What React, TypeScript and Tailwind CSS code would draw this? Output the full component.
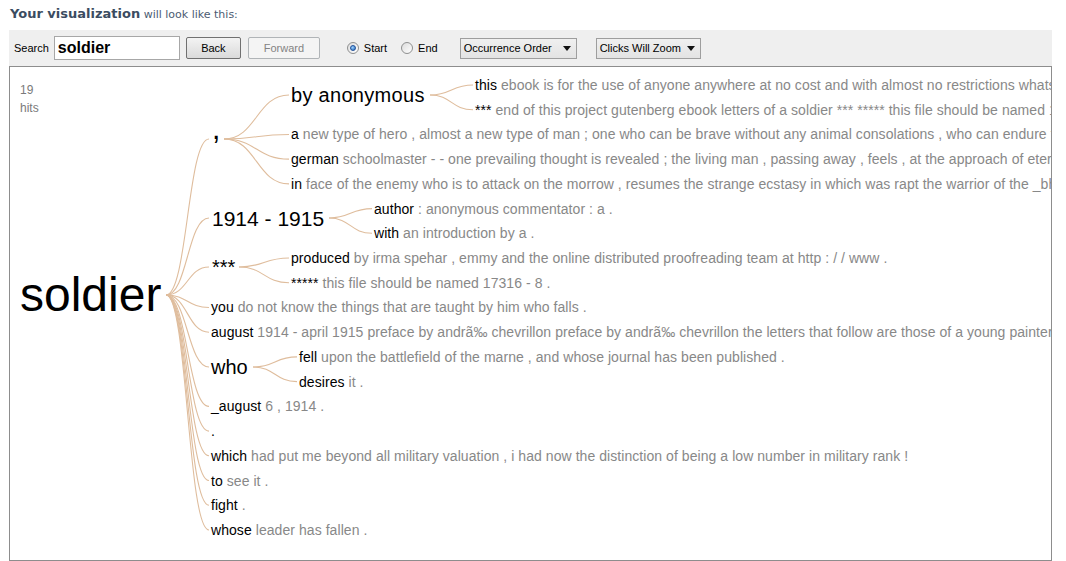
import React from "react";

// word tree canvas origin (inside the frame border), in page pixels
const OX = 10;
const OY = 67;
const row = (i: number) => 85 + i * 24.72;

type Leaf = { x: number; y: number; word: string; rest: string };
type Hub = { x: number; y: number; size: number; cls: string; word: string };

const hubs: Hub[] = [
  { x: 20, y: 295, size: 48, cls: "text-[48px]", word: "soldier" },
  { x: 212, y: 129, size: 30, cls: "text-[30px]", word: "," },
  { x: 291, y: 95, size: 20, cls: "text-[20px] tracking-[0.3px]", word: "by anonymous" },
  { x: 212, y: 218, size: 21, cls: "text-[21px]", word: "1914 - 1915" },
  { x: 212, y: 267, size: 20, cls: "text-[20px]", word: "***" },
  { x: 211, y: 367, size: 20, cls: "text-[20px]", word: "who" },
];

const leaves: Leaf[] = [
  { x: 475, y: row(0), word: "this", rest: " ebook is for the use of anyone anywhere at no cost and with almost no restrictions whatsoever ." },
  { x: 475, y: row(1), word: "***", rest: " end of this project gutenberg ebook letters of a soldier *** ***** this file should be named 17316 - 8 ." },
  { x: 291, y: row(2), word: "a", rest: " new type of hero , almost a new type of man ; one who can be brave without any animal consolations , who can endure the worst" },
  { x: 291, y: row(3), word: "german", rest: " schoolmaster - - one prevailing thought is revealed ; the living man , passing away , feels , at the approach of eternity" },
  { x: 291, y: row(4), word: "in", rest: " face of the enemy who is to attack on the morrow , resumes the strange ecstasy in which was rapt the warrior of the _bhagavad gita_" },
  { x: 374, y: row(5), word: "author", rest: " : anonymous commentator : a ." },
  { x: 374, y: row(6), word: "with", rest: " an introduction by a ." },
  { x: 291, y: row(7), word: "produced", rest: " by irma spehar , emmy and the online distributed proofreading team at http : / / www ." },
  { x: 291, y: row(8), word: "*****", rest: " this file should be named 17316 - 8 ." },
  { x: 211, y: row(9), word: "you", rest: " do not know the things that are taught by him who falls ." },
  { x: 211, y: row(10), word: "august", rest: " 1914 - april 1915 preface by andrã‰ chevrillon preface by andrã‰ chevrillon the letters that follow are those of a young painter" },
  { x: 299, y: row(11), word: "fell", rest: " upon the battlefield of the marne , and whose journal has been published ." },
  { x: 299, y: row(12), word: "desires", rest: " it ." },
  { x: 211, y: row(13), word: "_august", rest: " 6 , 1914 ." },
  { x: 211, y: row(14), word: ".", rest: "" },
  { x: 211, y: row(15), word: "which", rest: " had put me beyond all military valuation , i had now the distinction of being a low number in military rank !" },
  { x: 211, y: row(16), word: "to", rest: " see it ." },
  { x: 211, y: row(17), word: "fight", rest: " ." },
  { x: 211, y: row(18), word: "whose", rest: " leader has fallen ." },
];

// [fromX, fromY, toX, toY]
const edges: number[][] = [
  // soldier
  ...[139, 218, 267, row(9), row(10), 367, row(13), row(14), row(15), row(16), row(17), row(18)].map((y) => [166, 295, 209, y]),
  // ,
  [224, 139, 289, 95],
  ...[row(2), row(3), row(4)].map((y) => [224, 139, 289, y]),
  // by anonymous
  [430, 95, 473, row(0)],
  [430, 95, 473, row(1)],
  // 1914 - 1915
  [329, 218, 372, row(5)],
  [329, 218, 372, row(6)],
  // ***
  [239, 267, 289, row(7)],
  [239, 267, 289, row(8)],
  // who
  [253, 367, 297, row(11)],
  [253, 367, 297, row(12)],
];

function curve([x1, y1, x2, y2]: number[]) {
  const a = x1 - OX;
  const b = y1 - OY;
  const c = x2 - OX;
  const d = y2 - OY;
  const m = (a + c) / 2;
  return `M${a} ${b} C${m} ${b}, ${m} ${d}, ${c} ${d}`;
}

function Radio({ on, label }: { on: boolean; label: string }) {
  return (
    <label className="flex items-center gap-[5px] text-[11px] text-black">
      <span className="w-[12px] h-[12px] rounded-full border border-[#8e8f8f] bg-gradient-to-br from-[#dcdcdc] to-[#ffffff] flex items-center justify-center">
        {on && (
          <span className="w-[6px] h-[6px] rounded-full bg-[radial-gradient(circle_at_35%_35%,#9fd3ff,#1f67b8)] border border-[#20509a]" />
        )}
      </span>
      {label}
    </label>
  );
}

function Select({ label, w }: { label: string; w: string }) {
  return (
    <div className={`${w} h-[21px] border border-[#9e9e9e] bg-gradient-to-b from-[#f0f0f0] to-[#e3e3e3] flex items-center justify-between pl-[3px] pr-[5px] text-[11px] text-black whitespace-nowrap`}>
      <span>{label}</span>
      <svg width="8" height="5" viewBox="0 0 8 5">
        <path d="M0 0 H8 L4 5 Z" fill="#111" />
      </svg>
    </div>
  );
}

export default function App() {
  return (
    <div className="w-[1066px] h-[561px] overflow-hidden bg-white font-['Liberation_Sans',Arial,sans-serif]">
      <div className="h-[30px] pl-[10px] pt-[5px] font-['DejaVu_Sans',Verdana,sans-serif] leading-[16px]">
        <span className="text-[13px] font-bold text-[#3b4c61]">Your visualization</span>
        <span className="text-[11px] text-[#4c5b72]"> will look like this:</span>
      </div>

      <div className="ml-[9px] w-[1043px]">
        <div className="h-[36px] bg-[#efefef] flex items-center pl-[5px] text-[11px]">
          <span className="text-black">Search</span>
          <div className="ml-[5px] w-[126px] h-[24px] bg-white border border-[#a7a7a7] flex items-center pl-[3px] text-[16px] font-bold text-black">
            soldier
          </div>
          <button className="ml-[6px] w-[55px] h-[22px] rounded-[2px] border border-[#707070] bg-gradient-to-b from-[#f3f3f3] to-[#dadada] text-[11px] text-black">
            Back
          </button>
          <button className="ml-[7px] w-[72px] h-[22px] rounded-[2px] border border-[#b0b4b7] bg-[#f4f4f4] text-[11px] text-[#838383]">
            Forward
          </button>
          <div className="ml-[27px] flex items-center gap-[14px]">
            <Radio on label="Start" />
            <Radio on={false} label="End" />
          </div>
          <div className="ml-[22px]">
            <Select label="Occurrence Order" w="w-[117px]" />
          </div>
          <div className="ml-[19px]">
            <Select label="Clicks Will Zoom" w="w-[105px]" />
          </div>
        </div>

        <div className="relative w-[1043px] h-[495px] border border-[#8d8d8d] overflow-hidden bg-white">
          <div className="absolute left-[10px] top-[14px] text-[12px] leading-[18px] text-[#7a7a7a]">
            <div>19</div>
            <div>hits</div>
          </div>

          <svg className="absolute inset-0" width="1041" height="493">
            {edges.map((e, i) => (
              <path key={i} d={curve(e)} fill="none" stroke="#dfbd9d" strokeWidth="1.1" />
            ))}
          </svg>

          {hubs.map((h) => (
            <div
              key={h.word}
              className={`absolute whitespace-nowrap leading-none text-black ${h.cls}`}
              style={{ left: h.x - OX, top: h.y - OY - h.size / 2 }}
            >
              {h.word}
            </div>
          ))}

          {leaves.map((l, i) => (
            <div
              key={i}
              className="absolute whitespace-nowrap text-[14px] leading-[14px] tracking-[0.06px] text-black"
              style={{ left: l.x - OX, top: l.y - OY - 7 }}
            >
              {l.word}
              <span className="text-[#888888]">{l.rest}</span>
            </div>
          ))}
        </div>
      </div>
    </div>
  );
}
